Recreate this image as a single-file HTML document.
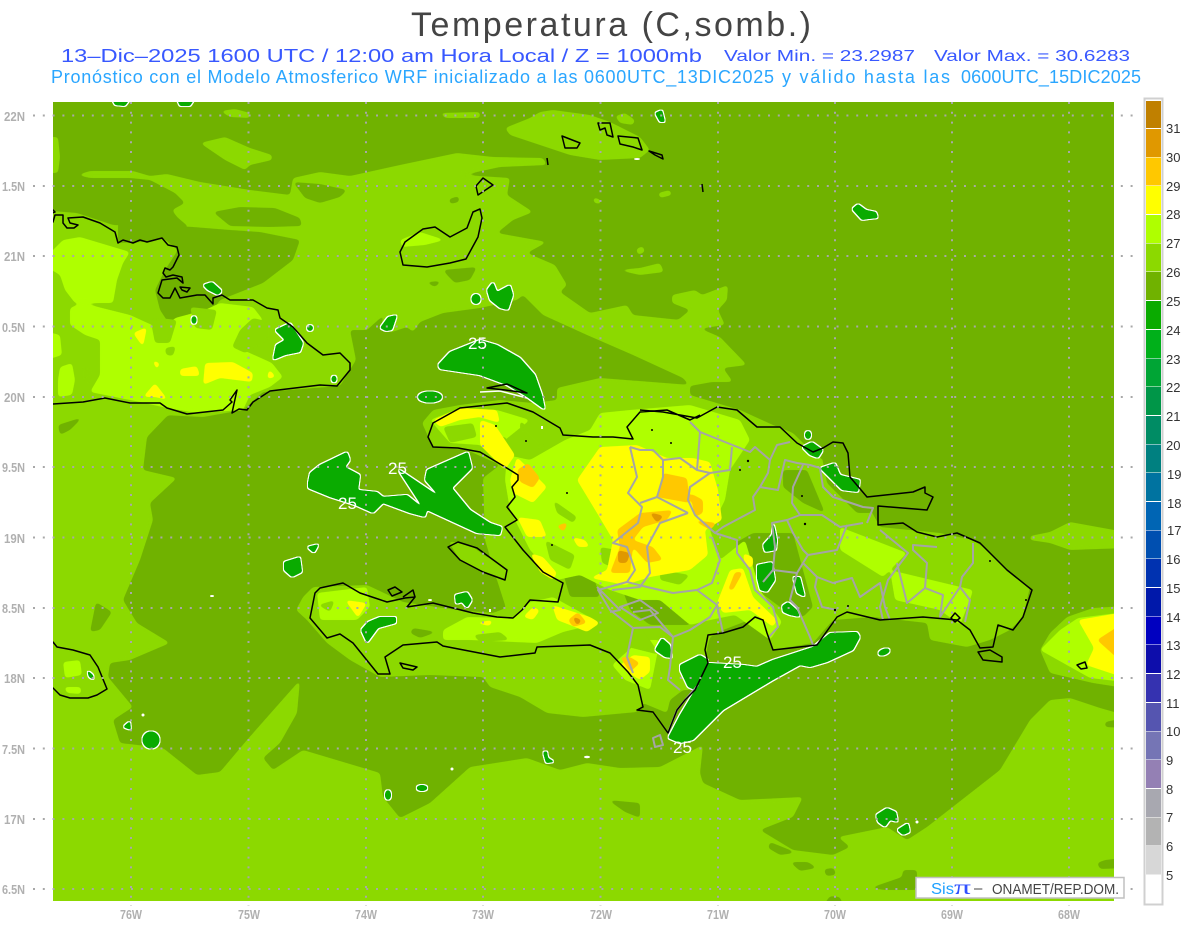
<!DOCTYPE html>
<html><head><meta charset="utf-8"><title>Temperatura</title>
<style>
html,body{margin:0;padding:0;background:#fff;width:1200px;height:927px;overflow:hidden}
svg{display:block}
text{font-family:"Liberation Sans",sans-serif}
.a{fill:#8cd900}.b{fill:#afff00}.d{fill:#70b200}.y{fill:#ffff00}.o{fill:#ffc800}.p{fill:#e09800}
.g{fill:#0aab00}
.c{fill:none;stroke:#000;stroke-width:1.5;stroke-linejoin:round}
.r{fill:none;stroke:#a5a5a5;stroke-width:2;stroke-linejoin:round}
.t{fill:#b0b0b0;font-size:12.5px;font-weight:bold}
.l{fill:#333;font-size:13px}
.w{fill:#fff;font-size:17px}
</style></head><body>
<svg width="1200" height="927" viewBox="0 0 1200 927" xmlns="http://www.w3.org/2000/svg">
<defs>
<filter id="s" filterUnits="userSpaceOnUse" x="0" y="0" width="1200" height="927" color-interpolation-filters="sRGB"><feGaussianBlur stdDeviation="1.8"/><feComponentTransfer><feFuncA type="linear" slope="8" intercept="-3.5"/></feComponentTransfer></filter>
<filter id="gf" filterUnits="userSpaceOnUse" x="0" y="0" width="1200" height="927" color-interpolation-filters="sRGB"><feGaussianBlur in="SourceGraphic" stdDeviation="1.1"/><feComponentTransfer result="s1"><feFuncA type="linear" slope="8" intercept="-3.2"/></feComponentTransfer><feMorphology in="s1" operator="dilate" radius="1" result="m"/><feFlood flood-color="#ffffff"/><feComposite in2="m" operator="in" result="ol"/><feMerge><feMergeNode in="ol"/><feMergeNode in="s1"/></feMerge></filter>
</defs>
<rect width="1200" height="927" fill="#fff"/>
<text x="411" y="36" font-size="34" fill="#444" textLength="400" lengthAdjust="spacing">Temperatura (C,somb.)</text>
<g font-size="18" fill="#3858ff">
<text x="61" y="62" textLength="641" lengthAdjust="spacingAndGlyphs">13–Dic–2025  1600 UTC / 12:00 am Hora Local / Z = 1000mb</text>
<text x="724" y="61" font-size="16" textLength="191" lengthAdjust="spacingAndGlyphs">Valor Min. = 23.2987</text>
<text x="934" y="61" font-size="16" textLength="196" lengthAdjust="spacingAndGlyphs">Valor Max. = 30.6283</text>
</g>
<g font-size="18" fill="#2aa6ff">
<text x="51" y="83" textLength="723" lengthAdjust="spacing">Pronóstico con el Modelo Atmosferico WRF inicializado a las 0600UTC_13DIC2025</text>
<text x="782" y="83" textLength="168" lengthAdjust="spacing">y válido hasta las</text>
<text x="961" y="83" textLength="180" lengthAdjust="spacing">0600UTC_15DIC2025</text>
</g>

<rect x="53" y="102" width="1061" height="799" fill="#70b200"/>
<svg x="53" y="102" width="1061" height="799" viewBox="53 102 1061 799">
<!-- level 27 -->
<g filter="url(#s)">
<polygon class="a" points="40,137 58,137 60,157 58,173 40,173"/>
<polygon class="a" points="220,111 235,109 250,113 250,118 230,117"/>
<polygon class="a" points="200,143 225,137 250,148 272,155 272,160 250,165 245,170 225,160"/>
<polygon class="a" points="440,113 480,112 480,118 445,118"/>
<polygon class="a" points="505,128 530,118 540,112 553,110 590,115 610,122 640,137 650,150 640,158 600,160 570,155 540,145 510,135"/>
<polygon class="a" points="615,116 625,113 635,120 633,125 620,123"/>
<polygon class="a" points="617,270 640,268 660,263 664,272 640,275"/>
<polygon class="a" points="672,295 695,290 702,295 728,285 727,300 718,310 725,325 690,330 678,320 690,310 672,303"/>
<polygon class="a" points="658,193 670,190 672,195 660,198"/>
<polygon class="a" points="593,197 601,200 601,204 594,203"/>
<polygon class="a" points="636,249 643,246 645,252 638,255"/>
<polygon class="a" points="40,210 77,213 113,225 188,228 190,228 177,217 172,210 185,203 175,193 150,180 130,178 90,178 77,175 90,171 133,171 150,176 167,174 200,182 250,190 290,195 293,178 320,172 350,176 400,165 457,153 493,157 543,158 547,165 500,167 463,175 510,178 507,195 533,212 513,220 497,233 547,242 527,253 555,265 567,285 560,292 590,313 627,305 633,315 680,320 720,337 747,365 723,368 733,382 712,382 690,386 683,378 633,355 587,335 543,315 523,295 517,300 480,308 443,313 420,322 413,332 407,327 387,312 367,330 350,330 356,360 340,386 263,392 243,410 203,417 163,415 170,413 147,437 143,470 177,478 150,503 153,520 140,560 123,600 137,623 170,643 130,660 110,663 108,677 133,707 113,720 120,743 163,748 197,775 220,772 247,740 300,680 297,713 280,743 263,758 273,770 303,750 380,773 383,797 400,818 430,803 470,767 527,758 560,770 587,763 620,768 660,767 703,745 700,773 703,783 740,800 803,797 793,817 760,830 793,850 833,855 850,847 838,837 887,827 907,840 927,827 1000,770 1030,720 1050,700 1070,698 1100,708 1125,715 1125,915 40,915"/>
<polygon class="a" points="1030,536 1050,532 1070,522 1125,532 1125,548 1070,550 1050,543 1030,540"/>
<polygon class="a" points="1040,650 1050,633 1067,617 1093,608 1125,606 1125,688 1093,683 1050,673"/>
<polygon class="a" points="422,423 433,410 460,405 500,400 533,403 557,400 557,388 600,378 690,385 690,395 740,410 773,425 793,433 807,447 835,470 853,490 867,503 880,527 940,533 973,540 983,547 1007,570 1030,587 1023,617 1010,630 990,640 967,647 930,640 927,623 873,617 833,620 813,643 773,650 768,637 757,617 723,630 710,637 705,657 690,690 683,690 670,700 667,713 643,703 637,712 583,717 547,713 520,697 490,687 483,677 430,675 380,677 350,660 327,643 307,620 296,610 303,597 313,587 367,585 403,602 457,610 493,613 506,608 497,580 485,540 483,478 500,465 467,450 433,447"/>
<polygon class="a" points="448,541 470,545 505,570 505,580 490,575 460,560"/>
<polygon class="a" points="385,312 400,313 407,327 392,332 380,330"/>
</g>
<!-- 26 patches -->
<g filter="url(#s)">
<polygon class="d" points="118,222 193,227 230,230 260,232 300,240 293,260 263,283 220,300 205,322 195,328 170,325 160,310 155,290 165,270 178,250 163,238 143,242 118,243"/>
<polygon class="d" points="213,212 240,207 275,208 300,218 302,226 270,227 230,226"/>
<polygon class="d" points="293,182 320,184 347,190 340,197 320,203 305,198"/>
<polygon class="d" points="443,270 477,267 470,280 455,283 448,276"/>
<polygon class="d" points="425,282 442,281 435,287"/>
<polygon class="d" points="449,199 459,196 459,202 450,204"/>
<polygon class="d" points="58,425 83,417 70,430 60,435"/>
<polygon class="d" points="96,602 112,612 100,630 90,632"/>
<polygon class="d" points="1105,722 1125,718 1125,728 1105,727"/>
<polygon class="d" points="608,800 640,803 640,818 625,812"/>
<polygon class="d" points="770,842 790,850 795,853 780,855 768,848"/>
<polygon class="d" points="790,862 808,862 817,868 800,871"/>
<polygon class="d" points="824,869 834,868 836,875 826,876"/>
<polygon class="d" points="870,888 902,877 903,870 917,870 917,890 885,890"/>
<polygon class="d" points="1097,863 1105,860 1125,858 1125,868 1100,869"/>
<polygon class="d" points="820,910 830,896 840,897 845,910"/>
<polygon class="d" points="563,573 593,575 600,597 570,597"/>
<polygon class="d" points="620,583 660,585 690,597 690,625 650,625 630,610"/>
<polygon class="d" points="753,533 793,533 813,607 803,617 780,607 757,590 750,563 735,543"/>
<polygon class="d" points="783,470 807,470 825,513 803,503 783,487"/>
<polygon class="d" points="820,447 860,487 873,513 857,513 827,483"/>
<polygon class="d" points="413,628 437,632 420,638 410,633"/>
</g>
<!-- level 28 -->
<g filter="url(#s)">
<polygon class="b" points="40,263 63,240 80,237 130,252 123,263 117,280 113,303 75,303 65,290 60,275"/>
<polygon class="b" points="70,308 82,303 130,315 163,330 175,318 205,310 220,303 253,307 263,320 250,330 232,345 272,363 283,377 270,387 250,395 243,410 197,413 167,408 140,402 105,395 90,392 100,375 100,340 85,335 70,325"/>
<polygon class="b" points="60,367 72,363 75,380 72,395 58,397 58,380"/>
<polygon class="b" points="40,330 60,335 62,355 40,362"/>
<polygon class="b" points="400,240 420,232 445,240 425,245 402,247"/>
<polygon class="b" points="63,662 80,660 82,675 65,678"/>
<polygon class="b" points="64,687 81,687 81,694 67,693"/>
<polygon class="b" points="430,420 460,408 497,410 530,420 505,440 515,470 480,445 450,443"/>
<polygon class="b" points="507,455 530,460 565,440 590,430 600,413 630,410 690,405 740,420 750,440 730,470 725,500 710,530 720,560 745,540 760,590 782,622 770,640 735,615 710,620 690,625 660,600 640,600 610,590 580,575 557,580 530,550 510,510 505,480"/>
<polygon class="b" points="443,630 467,617 513,618 527,603 553,597 600,623 563,632 537,643 470,640 443,640"/>
<polygon class="b" points="317,593 367,587 370,607 357,620 320,620"/>
<polygon class="b" points="612,665 640,640 660,640 650,690 625,680"/>
<polygon class="b" points="840,527 907,553 897,563 883,577 840,550"/>
<polygon class="b" points="890,570 973,590 970,600 960,625 940,610 895,600"/>
<polygon class="b" points="1040,650 1060,630 1078,618 1125,612 1125,682 1090,678"/>
</g>
<!-- 27 in 28 -->
<g filter="url(#s)">
<polygon class="a" points="150,317 177,320 170,343 155,343"/>
<polygon class="a" points="190,307 217,310 212,330 195,328"/>
<polygon class="a" points="253,318 270,322 270,340 245,353 232,347 240,330"/>
<polygon class="a" points="82,365 93,370 90,385 82,380"/>
<polygon class="a" points="165,348 176,346 173,356 166,355"/>
<polygon class="a" points="443,427 473,423 477,437 450,443"/>
<polygon class="a" points="520,420 547,447 540,450 520,430"/>
<polygon class="a" points="553,500 577,517 573,523 557,513"/>
<polygon class="a" points="545,540 575,555 570,570 550,560"/>
<polygon class="a" points="490,433 507,438 510,458 495,455"/>
<polygon class="a" points="600,620 640,625 660,655 620,645 590,630"/>
<polygon class="a" points="473,635 500,632 510,640 480,642"/>
<polygon class="a" points="318,605 335,600 330,612"/>
<polygon class="a" points="660,570 690,575 680,585 660,580"/>
<polygon class="a" points="670,533 695,528 700,545 680,555"/>
<polygon class="a" points="600,547 617,550 612,567 602,563"/>
</g>
<!-- yellow -->
<g filter="url(#s)">
<polygon class="y" points="133,333 147,327 143,347"/>
<polygon class="y" points="180,369 197,366 200,376 180,376"/>
<polygon class="y" points="205,363 233,362 253,373 252,382 220,378 203,385"/>
<polygon class="y" points="143,397 155,383 168,400 155,397"/>
<polygon class="y" points="269,369 276,377 267,379"/>
<polygon class="y" points="152,360 160,363 157,370"/>
<polygon class="y" points="433,420 460,408 497,410 500,423 480,417 460,420 440,427"/>
<polygon class="y" points="480,420 495,425 515,455 505,470 480,445"/>
<polygon class="y" points="517,457 547,487 533,503 513,493 510,480"/>
<polygon class="y" points="517,517 540,520 547,537 527,537"/>
<polygon class="y" points="530,553 543,557 557,573 553,580 540,572"/>
<polygon class="y" points="572,537 585,540 590,547 578,547"/>
<polygon class="y" points="600,447 637,445 667,458 693,458 710,462 718,490 722,520 705,530 708,555 690,570 650,577 625,585 590,578 607,570 613,540 597,513 577,480"/>
<polygon class="y" points="730,570 743,568 753,597 777,620 773,627 750,610 723,613 717,603"/>
<polygon class="y" points="743,553 753,557 753,567 745,567"/>
<polygon class="y" points="345,600 367,603 358,618"/>
<polygon class="y" points="473,623 493,620 490,626"/>
<polygon class="y" points="552,605 590,617 600,623 587,632 570,625 557,620"/>
<polygon class="y" points="523,617 533,607 540,610 533,620"/>
<polygon class="y" points="620,665 633,655 650,657 650,672 640,680 627,672"/>
<polygon class="y" points="1078,620 1125,612 1125,678 1086,665 1094,648"/>
</g>
<!-- orange -->
<g filter="url(#s)">
<polygon class="o" points="517,470 528,463 540,478 533,488 520,482"/>
<polygon class="o" points="556,526 568,522 564,532"/>
<polygon class="o" points="568,620 578,612 587,623 573,627"/>
<polygon class="o" points="663,473 687,478 690,503 657,497"/>
<polygon class="o" points="690,493 703,500 703,513 695,517"/>
<polygon class="o" points="693,520 717,523 710,530"/>
<polygon class="o" points="617,530 640,513 673,510 667,520 643,527 633,540 653,547 663,560 647,563 633,547 630,573 610,573 620,547"/>
<polygon class="o" points="735,572 743,572 733,590 728,590"/>
<polygon class="o" points="620,657 630,657 640,663 630,672"/>
<polygon class="o" points="1097,640 1125,622 1125,665"/>
</g>
<g filter="url(#s)">
<polygon class="p" points="649,512 664,516 657,523"/>
<polygon class="p" points="618,550 630,553 627,563 618,563"/>
<polygon class="p" points="572,616 582,620 577,626"/>
</g>

<!-- green 25 -->
<g filter="url(#gf)">
<polygon class="g" points="438,365 450,352 480,340 497,345 520,358 535,375 542,395 545,410 527,397 507,385 480,375 440,369"/>
<polygon class="g" points="308,483 310,473 320,465 347,452 350,460 345,467 360,475 358,490 377,492 383,497 407,495 423,508 397,468 440,497 425,480 427,470 468,452 472,468 452,488 470,510 490,523 502,527 500,535 477,533 427,510 425,517 410,513 383,503 373,513 355,505 330,497 308,488"/>
<polygon class="g" points="668,738 680,715 695,690 708,663 743,665 757,667 773,660 813,647 830,633 857,632 860,637 853,650 827,662 810,667 800,665 773,680 723,710 693,740 680,743"/>
<polygon class="g" points="680,665 700,655 708,660 695,690 688,687 680,670"/>
<polygon class="g" points="655,650 662,638 670,645 672,658 665,657"/>
<polygon class="g" points="773,520 777,540 776,550 765,552 763,545 772,535"/>
<polygon class="g" points="757,565 772,562 775,580 767,592 760,590 757,578"/>
<polygon class="g" points="793,577 800,577 805,597 797,593"/>
<polygon class="g" points="782,606 788,602 797,610 800,617 790,615 783,612"/>
<polygon class="g" points="802,447 812,442 823,450 818,458 810,455"/>
<ellipse class="g" cx="808" cy="435" rx="3" ry="4"/>
<polygon class="g" points="820,468 835,463 840,475 860,480 858,492 842,490 830,478"/>
<ellipse class="g" cx="884" cy="652" rx="6" ry="3" transform="rotate(-20 884 652)"/>
<polygon class="g" points="852,209 858,204 866,210 876,212 878,218 868,219 862,220"/>
<polygon class="g" points="487,290 493,282 497,292 510,285 513,295 508,310 500,308 490,300"/>
<ellipse class="g" cx="476" cy="299" rx="4.500" ry="5"/>
<polygon class="g" points="655,113 662,110 665,122 660,122"/>
<polygon class="g" points="110,95 133,95 125,106 115,105"/>
<polygon class="g" points="175,95 197,95 190,106 180,106"/>
<polygon class="g" points="203,285 212,282 222,291 218,295 208,290"/>
<polygon class="g" points="380,328 388,317 397,315 392,330 386,331"/>
<polygon class="g" points="273,360 276,345 285,340 275,330 290,323 303,343 300,352 285,355"/>
<ellipse class="g" cx="310" cy="328" rx="3" ry="3"/>
<ellipse class="g" cx="194" cy="320" rx="2.500" ry="4"/>
<ellipse class="g" cx="334" cy="379" rx="2.500" ry="3.500"/>
<ellipse class="g" cx="430" cy="397" rx="12" ry="5.500"/>
<polygon class="g" points="284,562 300,557 302,572 292,577 284,570"/>
<polygon class="g" points="307,547 319,544 314,553"/>
<polygon class="g" points="455,595 467,592 472,600 467,608 462,602 456,604"/>
<polygon class="g" points="361,630 368,622 380,617 396,617 396,623 378,628 367,643"/>
<polygon class="g" points="87,670 93,675 94,680 89,677"/>
<polygon class="g" points="123,727 130,721 131,730"/>
<ellipse class="g" cx="151" cy="740" rx="8.500" ry="8.500"/>
<ellipse class="g" cx="388" cy="795" rx="3" ry="5"/>
<ellipse class="g" cx="422" cy="788" rx="5.500" ry="3"/>
<polygon class="g" points="543,752 547,751 548,758 555,762 546,763"/>
<polygon class="g" points="876,815 887,808 896,812 898,822 890,820 885,827 878,822"/>
<polygon class="g" points="897,830 908,823 910,832 903,835"/>
</g>
<polyline points="480,392 500,391 527,398" fill="none" stroke="#fff" stroke-width="1.500"/>
<g fill="#fff">
<ellipse cx="587" cy="757" rx="3" ry="1.200"/><circle cx="452" cy="769" r="1.500"/><circle cx="917" cy="822" r="1.500"/><circle cx="143" cy="715" r="1.500"/><ellipse cx="637" cy="159" rx="3" ry="1"/><ellipse cx="430" cy="600" rx="2" ry="1"/><rect x="489" y="609" width="2" height="3"/><ellipse cx="212" cy="596" rx="2" ry="1"/><rect x="541" y="426" width="2" height="3"/>
</g>

<!-- provinces -->
<polyline class="r" points="630,447 637,477 628,493 642,507 638,523 613,543 627,547 635,570 627,582 598,590 610,610 633,628 627,657 633,673"/>
<polyline class="r" points="690,422 700,432 697,470 710,473 690,487 688,500 695,515 715,533 737,540 737,553 750,570 755,590 773,607 778,627 768,638"/>
<polyline class="r" points="700,432 720,440 750,452 755,447 770,460 777,445 790,442"/>
<polyline class="r" points="732,447 730,470 710,473"/>
<polyline class="r" points="770,460 768,473 760,487 753,497 755,510 723,527 715,533"/>
<polyline class="r" points="760,487 778,490 785,460 797,463 810,465 820,468 823,487 833,497 863,507 873,508 867,523"/>
<polyline class="r" points="803,465 793,487 792,503 800,515 822,515 840,527 863,523"/>
<polyline class="r" points="800,515 787,520 772,523 775,547 773,570 763,582"/>
<polyline class="r" points="773,570 797,573 790,600 797,607 810,637 813,645"/>
<polyline class="r" points="787,520 793,533 803,550 808,555 837,550 847,525"/>
<polyline class="r" points="808,555 803,563 797,573"/>
<polyline class="r" points="803,563 817,577 815,587 822,607 837,610"/>
<polyline class="r" points="817,577 833,583 852,578 860,597 880,583 885,607 890,620"/>
<polyline class="r" points="880,530 908,553 888,580 880,607 883,620"/>
<polyline class="r" points="897,563 907,603 925,588 927,563 913,550 913,545 937,547"/>
<polyline class="r" points="925,588 943,595 940,617 960,587 970,600 965,622"/>
<polyline class="r" points="960,587 962,577 973,563 973,543"/>
<polyline class="r" points="630,447 640,450 653,450 663,460 680,458 697,470"/>
<polyline class="r" points="663,460 663,477 657,497 688,513"/>
<polyline class="r" points="657,497 640,503"/>
<polyline class="r" points="688,513 660,523 647,547 650,573 640,587 612,590"/>
<polyline class="r" points="712,537 720,560 712,583 697,590 673,593 647,587 627,582"/>
<polyline class="r" points="697,590 717,605 710,617 690,630 673,637 650,610 633,612"/>
<polyline class="r" points="673,637 670,667 668,680 680,690"/>
<polyline class="r" points="717,605 723,633"/>
<polyline class="r" points="633,628 660,627 673,637"/>
<polygon class="r" points="620,607 640,600 658,613 640,620"/>
<polygon class="r" points="653,738 660,735 663,745 655,747"/>
<polyline class="r" points="597,587 620,610 610,612"/>
<polyline class="r" points="698,685 685,700 677,710 668,733"/>

<!-- coast -->
<polyline class="c" points="35,207 37,203 50,207 55,212 47,215 53,222 55,215 63,215 63,223 67,228 74,228 78,225 70,223 68,218 83,217 100,223 115,232 118,243 123,240 133,243 140,240 147,242 162,238 168,245 177,247 179,255 173,267 170,270 165,268 163,273 166,277 173,275 182,277 183,283 177,278 162,280 158,293 163,298 170,298 175,288 180,298 197,295 205,295 213,304 213,298 222,295 230,300 243,300 253,300 267,308 278,310 280,318 293,327 307,343 323,355 340,353 350,363 350,370 337,386 320,385 270,391 253,402 247,410 239,409 232,413 237,390 230,400 232,402 223,410 187,414 167,408 160,403 130,403 105,398 83,402 53,404 35,407"/>
<polygon class="c" points="180,287 190,288 187,292 182,290"/>
<polyline class="c" points="35,633 40,640 53,642 57,647 73,650 90,655 98,667 107,689 97,695 88,698 70,698 60,695 52,687 42,687 37,683 42,687 37,688"/>
<polyline class="c" points="700,415 690,420 667,410 640,412 627,427 633,439 613,437 593,437 563,435 560,428 533,412 507,403 460,408 433,423 428,437 433,447 458,448 480,452 510,470 518,475 518,480 512,487 515,497 507,507 517,520 505,527 523,550 543,572 563,583 558,602 530,600 522,610 513,618 497,617 473,613 433,603 407,607 415,597 405,598 387,602 360,593 343,583 320,588 315,593 310,618 327,638 340,634 353,643 378,674 390,674 385,657 403,645 437,642 443,646 500,657 535,653 537,647 590,645 610,653 628,672 638,685 643,707 637,710 653,712 668,733 677,710 685,700 695,690 708,663 705,650 708,635 723,633 743,627 755,617 763,620 767,633 773,650 817,645 837,617 847,612 880,620 923,617 957,620 970,630 980,648 993,647 998,625 1013,630 1023,617 1032,590 1007,570 980,543 957,533 937,537 917,532 903,523 878,525 878,506 927,510 933,497 925,493 925,487 913,492 867,497 850,477 848,453 843,443 833,442 823,448 813,452 797,443 780,427 757,427 737,410 717,407 697,418 663,412 640,410"/>
<polygon class="c" points="978,652 990,650 1002,657 1002,662 983,660"/>
<polygon class="c" points="448,547 458,542 477,548 507,570 505,580 483,572 460,560"/>
<polygon class="c" points="487,388 507,384 527,393 505,390"/>
<polygon class="c" points="598,123 610,123 613,137 607,135 605,128 600,130"/>
<polygon class="c" points="618,136 638,138 642,150 633,147 620,144"/>
<polygon class="c" points="649,151 662,155 663,159 655,155"/>
<polygon class="c" points="562,136 580,143 577,148 565,148"/>
<polyline class="c" points="547,158 548,165"/><polyline class="c" points="702,184 703,192"/>
<polygon class="c" points="483,178 493,185 478,195 476,186"/>
<polygon class="c" points="480,209 482,218 478,237 466,259 450,263 427,267 403,265 400,252 405,242 423,229 435,227 450,237 467,228 473,212"/>
<polygon class="c" points="400,663 417,667 413,670 403,668"/>
<polygon class="c" points="388,590 395,587 402,592 392,596"/>
<polygon class="c" points="1077,665 1085,662 1087,668 1081,669"/>
<polygon class="c" points="951,618 955,613 960,618 955,622"/>
<polyline class="c" points="403,597 413,590 415,597"/>
<g fill="#000"><circle cx="496" cy="426" r="1"/><circle cx="526" cy="441" r="1"/><circle cx="552" cy="545" r="1"/><circle cx="567" cy="493" r="1"/><circle cx="652" cy="430" r="1"/><circle cx="671" cy="443" r="1"/><circle cx="748" cy="461" r="1.200"/><circle cx="740" cy="470" r="1"/><circle cx="802" cy="496" r="1"/><circle cx="805" cy="524" r="1.200"/><circle cx="990" cy="561" r="1"/><circle cx="1026" cy="600" r="1"/><circle cx="835" cy="610" r="1.200"/><circle cx="848" cy="606" r="1"/></g>
</svg>

<!-- grid -->
<g stroke="#a8a8a8" stroke-width="2" stroke-dasharray="2 7.8" fill="none">
<path d="M33 115.500H1135M33 186H1135M33 256H1135M33 326.500H1135M33 397H1135M33 467H1135M33 537.500H1135M33 608H1135M33 678H1135M33 748.500H1135M33 819H1135M33 889H1135"/>
<path d="M131 102V906M248.500 102V906M366 102V906M483 102V906M600.500 102V906M718 102V906M835 102V906M952 102V906M1069 102V906"/>
</g>

<!-- contour labels -->
<text class="w" x="468" y="349">25</text>
<text class="w" x="388" y="474">25</text>
<text class="w" x="338" y="509">25</text>
<text class="w" x="723" y="668">25</text>
<text class="w" x="673" y="753">25</text>

<!-- axis labels -->
<g>
<text class="t" x="4" y="121" textLength="21" lengthAdjust="spacingAndGlyphs">22N</text>
<text class="t" x="2" y="191" textLength="23" lengthAdjust="spacingAndGlyphs">1.5N</text>
<text class="t" x="4" y="261" textLength="21" lengthAdjust="spacingAndGlyphs">21N</text>
<text class="t" x="2" y="332" textLength="23" lengthAdjust="spacingAndGlyphs">0.5N</text>
<text class="t" x="4" y="402" textLength="21" lengthAdjust="spacingAndGlyphs">20N</text>
<text class="t" x="2" y="472" textLength="23" lengthAdjust="spacingAndGlyphs">9.5N</text>
<text class="t" x="4" y="543" textLength="21" lengthAdjust="spacingAndGlyphs">19N</text>
<text class="t" x="2" y="613" textLength="23" lengthAdjust="spacingAndGlyphs">8.5N</text>
<text class="t" x="4" y="683" textLength="21" lengthAdjust="spacingAndGlyphs">18N</text>
<text class="t" x="2" y="754" textLength="23" lengthAdjust="spacingAndGlyphs">7.5N</text>
<text class="t" x="4" y="824" textLength="21" lengthAdjust="spacingAndGlyphs">17N</text>
<text class="t" x="2" y="894" textLength="23" lengthAdjust="spacingAndGlyphs">6.5N</text>
<text class="t" x="120" y="919" textLength="22" lengthAdjust="spacingAndGlyphs">76W</text>
<text class="t" x="238" y="919" textLength="22" lengthAdjust="spacingAndGlyphs">75W</text>
<text class="t" x="355" y="919" textLength="22" lengthAdjust="spacingAndGlyphs">74W</text>
<text class="t" x="472" y="919" textLength="22" lengthAdjust="spacingAndGlyphs">73W</text>
<text class="t" x="590" y="919" textLength="22" lengthAdjust="spacingAndGlyphs">72W</text>
<text class="t" x="707" y="919" textLength="22" lengthAdjust="spacingAndGlyphs">71W</text>
<text class="t" x="824" y="919" textLength="22" lengthAdjust="spacingAndGlyphs">70W</text>
<text class="t" x="941" y="919" textLength="22" lengthAdjust="spacingAndGlyphs">69W</text>
<text class="t" x="1058" y="919" textLength="22" lengthAdjust="spacingAndGlyphs">68W</text>
</g>

<!-- colorbar -->
<rect x="1144.500" y="98.500" width="18" height="806" fill="#fff" stroke="#d0d0d0" stroke-width="2"/>
<g>
<rect x="1146" y="101" width="15" height="27" fill="#c08000"/>
<rect x="1146" y="129" width="15" height="28" fill="#e09800"/>
<rect x="1146" y="157.500" width="15" height="28" fill="#ffc800"/>
<rect x="1146" y="186" width="15" height="28" fill="#ffff00"/>
<rect x="1146" y="215" width="15" height="28" fill="#afff00"/>
<rect x="1146" y="243.500" width="15" height="28" fill="#8cd900"/>
<rect x="1146" y="272" width="15" height="28" fill="#70b200"/>
<rect x="1146" y="301" width="15" height="28" fill="#0aab00"/>
<rect x="1146" y="330" width="15" height="28" fill="#00b01a"/>
<rect x="1146" y="358.500" width="15" height="28" fill="#00a535"/>
<rect x="1146" y="387" width="15" height="28" fill="#009648"/>
<rect x="1146" y="416" width="15" height="28" fill="#008c64"/>
<rect x="1146" y="444.500" width="15" height="28" fill="#008080"/>
<rect x="1146" y="473" width="15" height="28" fill="#0073a0"/>
<rect x="1146" y="502" width="15" height="28" fill="#0065b4"/>
<rect x="1146" y="530.500" width="15" height="28" fill="#004fb0"/>
<rect x="1146" y="559" width="15" height="28" fill="#0032b0"/>
<rect x="1146" y="588" width="15" height="28" fill="#0018aa"/>
<rect x="1146" y="616.500" width="15" height="28" fill="#0000c0"/>
<rect x="1146" y="645" width="15" height="28" fill="#0d0dab"/>
<rect x="1146" y="674" width="15" height="28" fill="#3532b0"/>
<rect x="1146" y="703" width="15" height="28" fill="#5555b0"/>
<rect x="1146" y="731.500" width="15" height="28" fill="#7575b5"/>
<rect x="1146" y="760" width="15" height="28" fill="#9480b4"/>
<rect x="1146" y="789" width="15" height="28" fill="#a8a8b0"/>
<rect x="1146" y="817.500" width="15" height="28" fill="#b3b3b3"/>
<rect x="1146" y="846" width="15" height="28.500" fill="#d7d7d7"/>
<rect x="1146" y="875" width="15" height="28" fill="#ffffff"/>
</g>
<g>
<text class="l" x="1166" y="133">31</text><text class="l" x="1166" y="162">30</text><text class="l" x="1166" y="191">29</text><text class="l" x="1166" y="219">28</text><text class="l" x="1166" y="248">27</text><text class="l" x="1166" y="277">26</text><text class="l" x="1166" y="306">25</text><text class="l" x="1166" y="335">24</text><text class="l" x="1166" y="364">23</text><text class="l" x="1166" y="392">22</text><text class="l" x="1166" y="421">21</text><text class="l" x="1166" y="450">20</text><text class="l" x="1167" y="479">19</text><text class="l" x="1167" y="508">18</text><text class="l" x="1167" y="535">17</text><text class="l" x="1166" y="564">16</text><text class="l" x="1166" y="593">15</text><text class="l" x="1166" y="622">14</text><text class="l" x="1166" y="650">13</text><text class="l" x="1166" y="679">12</text><text class="l" x="1166" y="708">11</text><text class="l" x="1166" y="736">10</text><text class="l" x="1166" y="765">9</text><text class="l" x="1166" y="794">8</text><text class="l" x="1166" y="822">7</text><text class="l" x="1166" y="851">6</text><text class="l" x="1166" y="880">5</text>
</g>

<!-- logo -->
<rect x="916" y="877.500" width="208" height="20.500" fill="#fff" stroke="#c0c0c0" stroke-width="1.500"/>
<text x="931" y="894" font-size="16" fill="#1ea0ff" textLength="23" lengthAdjust="spacingAndGlyphs">Sis</text>
<text x="954" y="894" font-size="20" fill="#3050ff" style="font-family:'Liberation Serif',serif" textLength="17" lengthAdjust="spacingAndGlyphs">π</text>
<text x="974" y="893" font-size="15" fill="#444">–</text>
<text x="992" y="894" font-size="14.500" fill="#444" textLength="127" lengthAdjust="spacingAndGlyphs">ONAMET/REP.DOM.</text>
</svg>
</body></html>
